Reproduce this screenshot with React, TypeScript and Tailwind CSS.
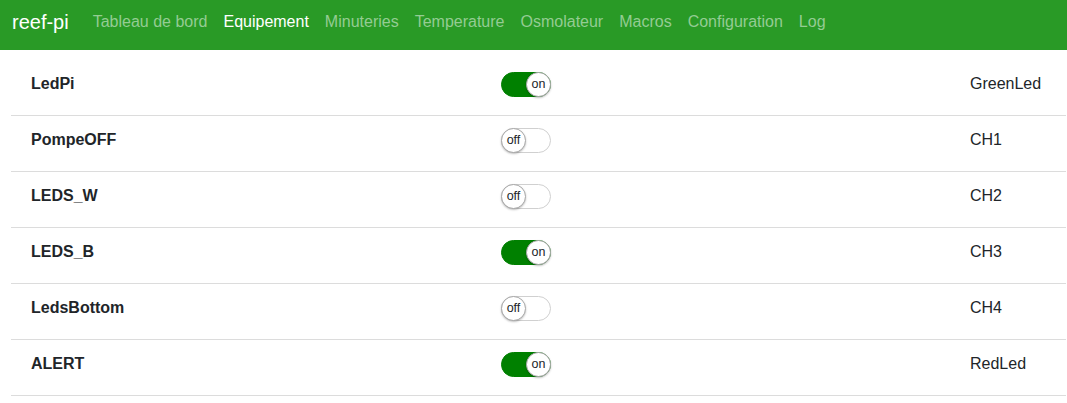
import React from "react";

const rows = [
  { name: "LedPi", on: true, out: "GreenLed" },
  { name: "PompeOFF", on: false, out: "CH1" },
  { name: "LEDS_W", on: false, out: "CH2" },
  { name: "LEDS_B", on: true, out: "CH3" },
  { name: "LedsBottom", on: false, out: "CH4" },
  { name: "ALERT", on: true, out: "RedLed" },
];

const links = [
  "Tableau de bord",
  "Equipement",
  "Minuteries",
  "Temperature",
  "Osmolateur",
  "Macros",
  "Configuration",
  "Log",
];

function Toggle({ on }: { on: boolean }) {
  return (
    <div
      className={`relative w-[50px] h-[25px] rounded-full border ${
        on ? "bg-[#008000] border-[#008000]" : "bg-white border-[#d0d0d0]"
      }`}
    >
      <div
        className={`absolute top-[-1px] ${
          on ? "right-[-1px]" : "left-[-1px]"
        } w-[25px] h-[25px] rounded-full bg-white border border-[#a8a8a8] shadow-[0_1px_2px_rgba(0,0,0,0.25)] flex items-center justify-center text-[12.5px] leading-none text-[#212529]`}
      >
        {on ? "on" : "off"}
      </div>
    </div>
  );
}

export default function App() {
  return (
    <div className="w-[1067px] h-[403px] bg-white font-['Liberation_Sans',Arial,sans-serif] overflow-hidden">
      <nav className="h-[50px] bg-[#299a26] flex items-center pl-[12px] pb-[7px]">
        <span className="text-white text-[20px] mr-[16px]">reef-pi</span>
        <div className="flex">
          {links.map((l) => (
            <span
              key={l}
              className={`px-[8px] text-[16px] ${
                l === "Equipement" ? "text-white" : "text-[#94cc93]"
              }`}
            >
              {l}
            </span>
          ))}
        </div>
      </nav>
      <div className="mt-[10px] ml-[11px] w-[1055px]">
        {rows.map((r) => (
          <div
            key={r.name}
            className="flex items-center h-[56px] pt-[12px] pb-[19px] border-b border-[#dcdcdc] text-[16px] text-[#212529]"
          >
            <div className="w-[490px] pl-[20px] font-bold">{r.name}</div>
            <div className="w-[469px] flex">
              <Toggle on={r.on} />
            </div>
            <div className="flex-1">{r.out}</div>
          </div>
        ))}
      </div>
    </div>
  );
}
